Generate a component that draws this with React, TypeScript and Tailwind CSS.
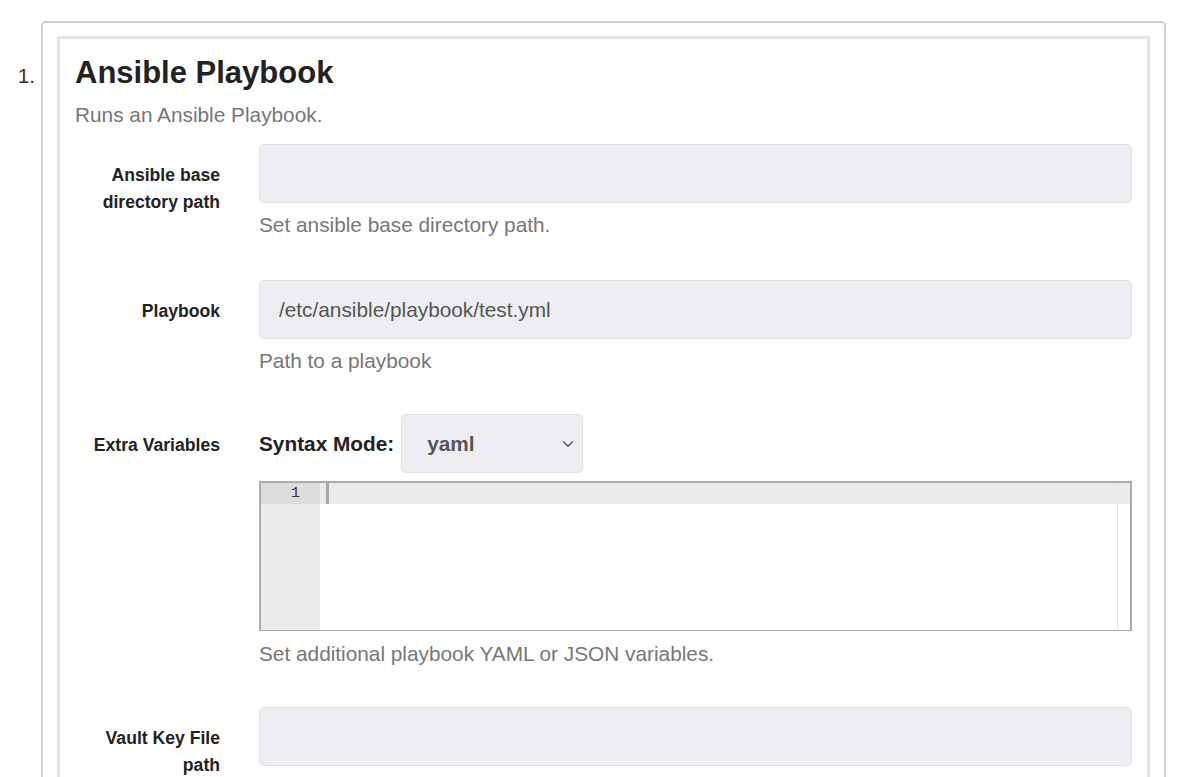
import { ChevronDown } from "lucide-react";

function FieldRow({ label, children, className }: { label: string; children: any; className?: string }) {
    return (
        <div className={"flex " + (className || "")}>
            <label className="w-[145px] shrink-0 text-right pt-[18px] text-[17.6px] leading-[27px] font-bold text-[#222]">
                {label}
            </label>
            <div className="ml-[39px] flex-1 min-w-0">{children}</div>
        </div>
    )
}

function TextBox({ value }: { value?: string }) {
    return (
        <div className="h-[59px] rounded-[5px] border border-[#e1e1e7] bg-[#eeeef2] px-[19px] flex items-center text-[#555]">
            {value}
        </div>
    )
}

function Help({ text }: { text: string }) {
    return <p className="mt-[7px] leading-[29px] text-[#777]">{text}</p>
}

export default function App() {
    return (
        <div className="h-[777px] overflow-hidden bg-white font-['Liberation_Sans',Arial,sans-serif] text-[20.8px] text-[#333]">
            <div className="flex pt-[21px]">
                <div className="w-[41px] shrink-0 text-right pr-[6px] pt-[42px] leading-[25px] text-[#333]">1.</div>
                <div className="w-[1125px] shrink-0 border-2 border-[#d0d0c9] rounded-[5px] px-[14px] pt-[13px] pb-[20px]">
                    <div className="border-[3px] border-[#e4e4e4] px-[15px] pt-[17px] pb-[80px]">
                        <h2 className="text-[31px] leading-[34px] font-bold text-[#222]">Ansible Playbook</h2>
                        <p className="mt-[10px] leading-[29px] text-[#777]">Runs an Ansible Playbook.</p>

                        <FieldRow label="Ansible base directory path" className="mt-[15px] mb-[41px]">
                            <TextBox />
                            <Help text="Set ansible base directory path." />
                        </FieldRow>

                        <FieldRow label="Playbook" className="mb-[39px]">
                            <TextBox value="/etc/ansible/playbook/test.yml" />
                            <Help text="Path to a playbook" />
                        </FieldRow>

                        <FieldRow label="Extra Variables" className="mb-[39px]">
                            <div className="flex items-center gap-[7px]">
                                <span className="font-bold text-[#222]">Syntax Mode:</span>
                                <div className="w-[182px] h-[59px] rounded-[5px] border border-[#e1e1e7] bg-[#eeeef2] pl-[25px] pr-[5px] flex items-center justify-between">
                                    <span className="font-bold text-[#555]">yaml</span>
                                    <ChevronDown size={18} strokeWidth={1.5} className="text-[#444]" />
                                </div>
                            </div>
                            <div className="mt-[8px] h-[150px] border-2 border-b border-[#acacac] flex bg-white">
                                <div className="w-[59px] shrink-0 bg-[#ebebeb] font-['Liberation_Mono',monospace] text-[15px]">
                                    <div className="h-[21px] bg-[#dcdcdc] text-right pr-[20px] leading-[21px] text-[#333]">1</div>
                                </div>
                                <div className="flex-1 relative">
                                    <div className="h-[21px] bg-[#ebebeb]"></div>
                                    <div className="absolute left-[6px] top-0 w-[3px] h-[21px] bg-[#a8a8a8]"></div>
                                    <div className="absolute right-[12px] top-0 bottom-0 w-px bg-[#e6e6e6]"></div>
                                </div>
                            </div>
                            <p className="mt-[8px] leading-[29px] text-[#777]">Set additional playbook YAML or JSON variables.</p>
                        </FieldRow>

                        <FieldRow label="Vault Key File path">
                            <TextBox />
                        </FieldRow>
                    </div>
                </div>
            </div>
        </div>
    )
}
